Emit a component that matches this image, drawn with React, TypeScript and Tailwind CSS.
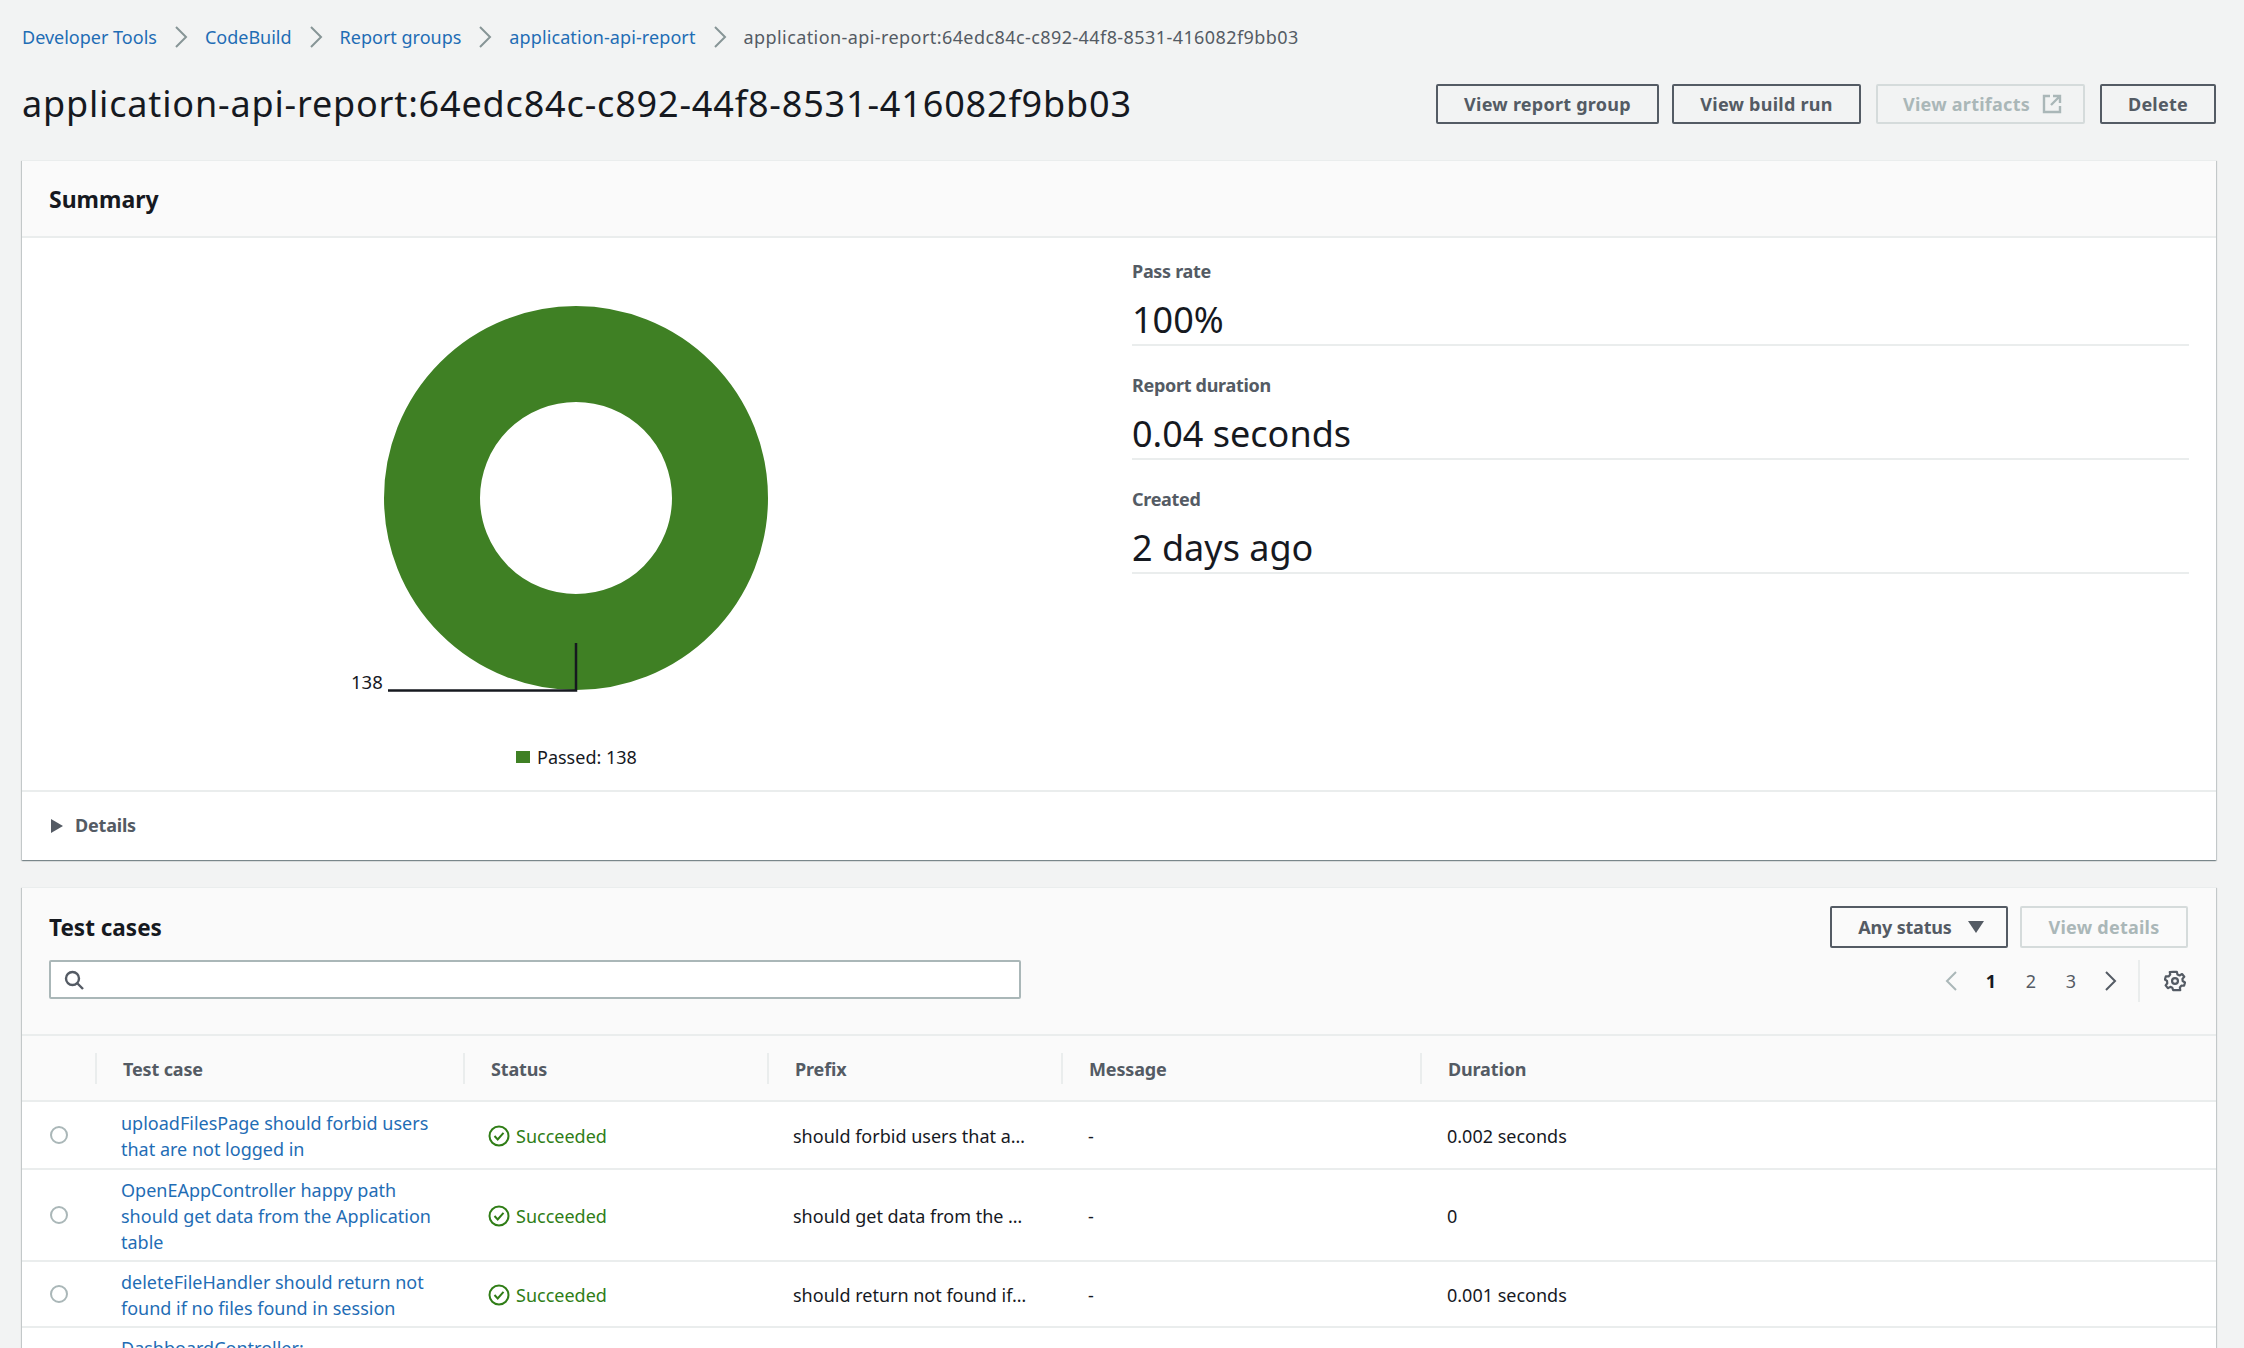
import React from "react";

const F = "font-['Noto_Sans','Open_Sans',sans-serif]";

function Sep() {
  return (
    <svg width="14" height="22" viewBox="0 0 14 22" className="mx-[17px] shrink-0">
      <path d="M2 1l10 10L2 21" fill="none" stroke="#879596" strokeWidth="2" />
    </svg>
  );
}

function Btn({ children, disabled, className = "" }: { children: React.ReactNode; disabled?: boolean; className?: string }) {
  return (
    <div
      className={
        "flex items-center justify-center rounded-[2px] border-2 text-[18px] font-bold tracking-[0.25px] h-[40px] " +
        (disabled ? "border-[#d5dbdb] text-[#aab7b8] " : "border-[#545b64] text-[#545b64] ") +
        className
      }
    >
      {children}
    </div>
  );
}

function Stat({ label, value }: { label: string; value: string }) {
  return (
    <div className="border-b-2 border-[#eaeded] mb-[26px]">
      <div className="text-[18px] leading-[26px] font-bold tracking-[-0.3px] text-[#545b64]">{label}</div>
      <div className="text-[36px] leading-[48px] mt-[12px] text-[#16191f]">{value}</div>
    </div>
  );
}

const rows = [
  { name: ["uploadFilesPage should forbid users", "that are not logged in"], prefix: "should forbid users that a…", dur: "0.002 seconds", h: "h-[68px]" },
  { name: ["OpenEAppController happy path", "should get data from the Application", "table"], prefix: "should get data from the …", dur: "0", h: "h-[92px]" },
  { name: ["deleteFileHandler should return not", "found if no files found in session"], prefix: "should return not found if…", dur: "0.001 seconds", h: "h-[66px]" },
];

const grid = "grid grid-cols-[73px_368px_304px_294px_359px_1fr]";

function Check() {
  return (
    <svg width="22" height="22" viewBox="0 0 22 22" className="shrink-0">
      <circle cx="11" cy="11" r="9.5" fill="none" stroke="#2f7d16" strokeWidth="2" />
      <path d="M6.5 11l3.2 3.4 5.8-6.6" fill="none" stroke="#2f7d16" strokeWidth="2" />
    </svg>
  );
}

export default function App() {
  return (
    <div className={"h-[1348px] overflow-hidden bg-[#f2f3f3] pl-[22px] pr-[28px] text-[#16191f] " + F}>
      <nav className="flex items-center h-[26px] mt-[24px] text-[18px] leading-[26px]">
        <span className="text-[#1f6db5]">Developer Tools</span>
        <Sep />
        <span className="text-[#1f6db5]">CodeBuild</span>
        <Sep />
        <span className="text-[#1f6db5]">Report groups</span>
        <Sep />
        <span className="text-[#1f6db5] tracking-[0.1px]">application-api-report</span>
        <Sep />
        <span className="text-[#545b64] tracking-[0.42px]">application-api-report:64edc84c-c892-44f8-8531-416082f9bb03</span>
      </nav>

      <div className="flex items-center justify-between h-[40px] mt-[34px]">
        <h1 className="text-[36px] leading-[40px] font-normal whitespace-nowrap tracking-[0.83px]">application-api-report:64edc84c-c892-44f8-8531-416082f9bb03</h1>
        <div className="flex">
          <Btn className="w-[223px]">View report group</Btn>
          <Btn className="w-[189px] ml-[13px]">View build run</Btn>
          <Btn disabled className="w-[209px] ml-[15px] gap-[12px] pl-[4px]">
            View artifacts
            <svg width="20" height="20" viewBox="0 0 20 20" fill="none" stroke="#aab7b8" strokeWidth="2.4">
              <path d="M8 2H2v16h16v-6M11 2h7v7M18 2l-9 9" />
            </svg>
          </Btn>
          <Btn className="w-[116px] ml-[15px]">Delete</Btn>
        </div>
      </div>

      <section className="mt-[36px] bg-white border-t border-[#eaeded] shadow-[0_1px_1px_0_rgba(0,28,36,0.3),1px_1px_1px_0_rgba(0,28,36,0.15),-1px_1px_1px_0_rgba(0,28,36,0.15)]">
        <div className="h-[77px] bg-[#fafafa] border-b-2 border-[#eaeded] flex items-center px-[27px]">
          <h2 className="text-[23px] font-bold leading-[30px]">Summary</h2>
        </div>
        <div className="h-[554px] grid grid-cols-2 border-b-2 border-[#eaeded]">
          <div className="relative">
            <svg width="560" height="560" viewBox="0 0 560 560" className="absolute left-[0px] top-[0px]" style={{ overflow: "visible" }}>
              <circle cx="554" cy="260" r="144" fill="none" stroke="#3f8024" strokeWidth="96" />
              <path d="M366 452.500H554V405" fill="none" stroke="#16191f" strokeWidth="2.500" />
            </svg>
            <span className="absolute left-[329px] top-[431px] text-[18.500px] leading-[26px]">138</span>
            <div className="absolute left-[494px] top-[506px] flex items-center text-[18px] leading-[26px]">
              <span className="w-[14px] h-[12px] bg-[#3f8024] mr-[7px]" />
              Passed: 138
            </div>
          </div>
          <div className="pl-[13px] pr-[27px] pt-[20px]">
            <Stat label="Pass rate" value="100%" />
            <Stat label="Report duration" value="0.04 seconds" />
            <Stat label="Created" value="2 days ago" />
          </div>
        </div>
        <div className="h-[68px] pb-[1px] flex items-center pl-[29px] text-[18px] font-bold tracking-[-0.2px] text-[#545b64]">
          <svg width="12" height="14" viewBox="0 0 12 14" className="mr-[12px]"><path d="M0 0l12 7L0 14z" fill="#545b64" /></svg>
          Details
        </div>
      </section>

      <section className="mt-[27px] bg-white border-t border-[#eaeded] shadow-[0_1px_1px_0_rgba(0,28,36,0.3),1px_1px_1px_0_rgba(0,28,36,0.15),-1px_1px_1px_0_rgba(0,28,36,0.15)]">
        <div className="h-[148px] bg-[#fafafa] border-b-2 border-[#eaeded] pl-[27px] pr-[28px] pt-[18px] flex justify-between">
          <div className="w-[972px]">
            <h2 className="text-[22.500px] font-bold leading-[30px] mt-[7px]">Test cases</h2>
            <div className="mt-[17px] h-[39px] bg-white border-2 border-[#aab7b8] rounded-[2px] flex items-center pl-[13px]">
              <svg width="20" height="20" viewBox="0 0 20 20" fill="none" stroke="#545b64" strokeWidth="2.4" className="mt-[1px]">
                <circle cx="8.500" cy="8.500" r="6.500" /><path d="M13 13l6 6" />
              </svg>
            </div>
          </div>
          <div className="w-[358px]">
            <div className="flex gap-[12px]">
              <Btn className="w-[178px] !h-[42px] gap-[16px] pl-[4px]">
                <span className="tracking-[-0.2px]">Any status</span>
                <svg width="16" height="12" viewBox="0 0 16 12"><path d="M0 0h16L8 12z" fill="#545b64" /></svg>
              </Btn>
              <Btn disabled className="w-[168px] !h-[42px]">View details</Btn>
            </div>
            <div className="flex items-center h-[42px] mt-[12px] text-[18px] text-[#545b64]">
              <svg width="12" height="20" viewBox="0 0 12 20" className="ml-[115px]"><path d="M11 1L2 10l9 9" fill="none" stroke="#aab7b8" strokeWidth="2" /></svg>
              <span className="w-[40px] ml-[14px] text-center font-bold text-[#16191f]">1</span>
              <span className="w-[40px] text-center">2</span>
              <span className="w-[40px] text-center">3</span>
              <svg width="12" height="20" viewBox="0 0 12 20" className="ml-[14px]"><path d="M1 1l9 9-9 9" fill="none" stroke="#545b64" strokeWidth="2" /></svg>
              <span className="w-[2px] h-[42px] bg-[#eaeded] ml-[21px]" />
              <svg width="22" height="22" viewBox="0 0 24 24" fill="none" stroke="#545b64" strokeWidth="2.400" className="ml-[24px]">
                <circle cx="12" cy="12" r="3.200" />
                <path d="M10 2h4l.7 3 2.300 1 2.700-1.600 2.400 3-2 2.300.3 2.300 2.500 1.600-1 3.600-3-.1-1.600 1.900.4 3L14 22h-4l-.9-2.600-2.200-1-2.700 1.400-2.400-3 1.800-2.300-.3-2.600L1 10.400l1-3.600 3 .2L6.800 5l-.5-2.800z" strokeLinejoin="round" />
              </svg>
            </div>
          </div>
        </div>

        <div className={grid + " h-[66px] bg-[#fafafa] border-b-2 border-[#eaeded] items-center text-[18px] font-bold tracking-[-0.15px] text-[#545b64]"}>
          <div />
          {["Test case", "Status", "Prefix", "Message", "Duration"].map((h) => (
            <div key={h} className="border-l-2 border-[#eaeded] h-[31px] leading-[33px] pl-[26px]">{h}</div>
          ))}
        </div>

        {rows.map((r, i) => (
          <div key={i} className={grid + " " + r.h + " border-b-2 border-[#eaeded] items-center text-[18px] leading-[26px]"}>
            <div className="pl-[28px]">
              <div className="w-[18px] h-[18px] rounded-full border-2 border-[#aab7b8] bg-white" />
            </div>
            <div className="pl-[26px] pt-[2px] text-[#1f6db5]">
              {r.name.map((l) => (
                <div key={l} className="whitespace-nowrap">{l}</div>
              ))}
            </div>
            <div className="pl-[25px] pt-[2px] flex items-center gap-[6px] text-[#2f7d16]">
              <Check />
              Succeeded
            </div>
            <div className="pl-[26px] pt-[2px] whitespace-nowrap">{r.prefix}</div>
            <div className="pl-[27px] pt-[2px]">-</div>
            <div className="pl-[27px] pt-[2px]">{r.dur}</div>
          </div>
        ))}
        <div className={grid + " text-[18px] leading-[26px] pt-[7px]"}>
          <div />
          <div className="pl-[26px] text-[#1f6db5] whitespace-nowrap">DashboardController:</div>
        </div>
      </section>
    </div>
  );
}
